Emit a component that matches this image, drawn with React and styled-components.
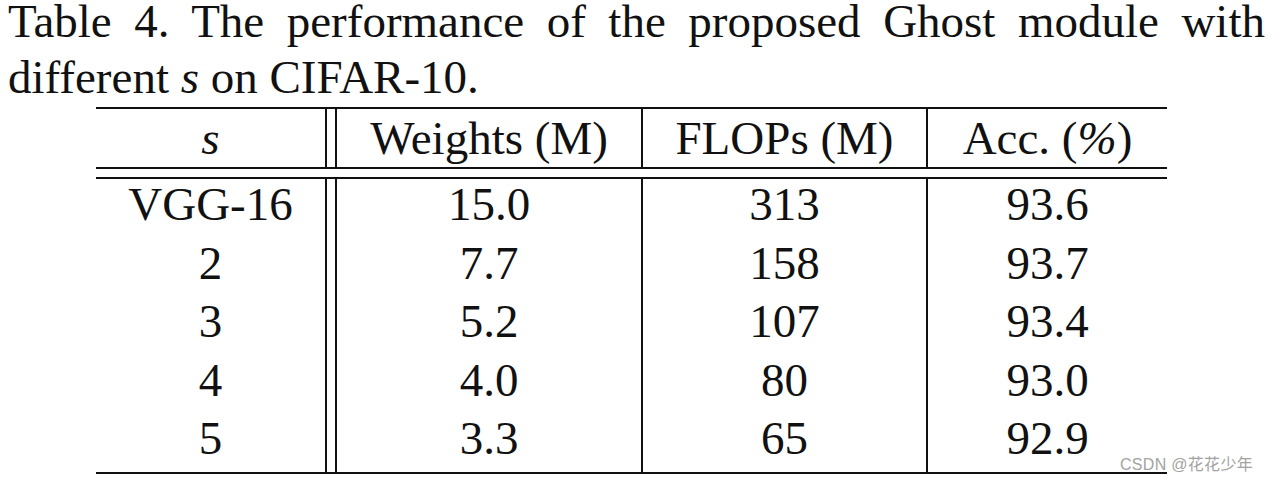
import React from 'react'
import styled, { createGlobalStyle } from 'styled-components'

const GlobalStyle = createGlobalStyle`
  * {
    box-sizing: border-box;
  }
  body {
    margin: 0;
    background: #fff;
  }
`

const Page = styled.div`
  position: relative;
  width: 1272px;
  height: 481px;
  overflow: hidden;
  color: #111;
  font-family: 'Liberation Serif', 'Times New Roman', serif;
`

const Caption = styled.p`
  margin: -7px 0 0 8px;
  width: 1257px;
  font-size: 47px;
  line-height: 56px;
  text-align: justify;
`

const Table = styled.div`
  margin: 2px 0 0 96px;
  width: 1071px;
  border-top: 2px solid #111;
  font-size: 47px;
`

const Row = styled.div`
  display: grid;
  grid-template-columns: 239px 308px 285px 239px;
  height: ${(p) => p.$height}px;
`

const Head = styled.div`
  border-bottom: 2px solid #111;
  margin-bottom: 8px;
`

const Body = styled.div`
  border-top: 2px solid #111;
  border-bottom: 2px solid #111;
`

const Cell = styled.div`
  display: flex;
  justify-content: center;
  align-items: ${(p) => (p.$head ? 'center' : 'flex-start')};
  padding-top: ${(p) => (p.$head ? 0 : 2)}px;
  line-height: 1;
  white-space: nowrap;
  border-right: ${(p) => (p.$last ? 'none' : '2px solid #111')};
  border-left: ${(p) => (p.$second ? '2px solid #111' : 'none')};
  margin-right: ${(p) => (p.$first ? 8 : 0)}px;
`

const Var = styled.i`
  font-style: italic;
`

const Watermark = styled.span`
  position: absolute;
  left: 1120px;
  top: 451px;
  font-family: 'Liberation Sans', 'Noto Sans CJK SC', sans-serif;
  font-size: 16px;
  letter-spacing: 0.3px;
  color: #a3a3a3;
  text-shadow: 0 0 2px #fff;
`

const rows = [
  ['VGG-16', '15.0', '313', '93.6'],
  ['2', '7.7', '158', '93.7'],
  ['3', '5.2', '107', '93.4'],
  ['4', '4.0', '80', '93.0'],
  ['5', '3.3', '65', '92.9'],
]

const headCells = [
  <Var key="s">s</Var>,
  'Weights (M)',
  'FLOPs (M)',
  <span key="acc">
    Acc. (<Var>%</Var>)
  </span>,
]

const TableRow = ({ cells, head, height }) => (
  <Row $height={height}>
    {cells.map((c, i) => (
      <Cell
        key={i}
        $head={head}
        $first={i === 0}
        $second={i === 1}
        $last={i === cells.length - 1}
      >
        {c}
      </Cell>
    ))}
  </Row>
)

const App = () => (
  <Page>
    <GlobalStyle />
    <Caption>
      Table 4. The performance of the proposed Ghost module with different <Var>s</Var> on
      CIFAR-10.
    </Caption>
    <Table>
      <Head>
        <TableRow head height={58} cells={headCells} />
      </Head>
      <Body>
        {rows.map((r) => (
          <TableRow key={r[0]} height={58.6} cells={r} />
        ))}
      </Body>
    </Table>
    <Watermark>CSDN @花花少年</Watermark>
  </Page>
)

export default App
